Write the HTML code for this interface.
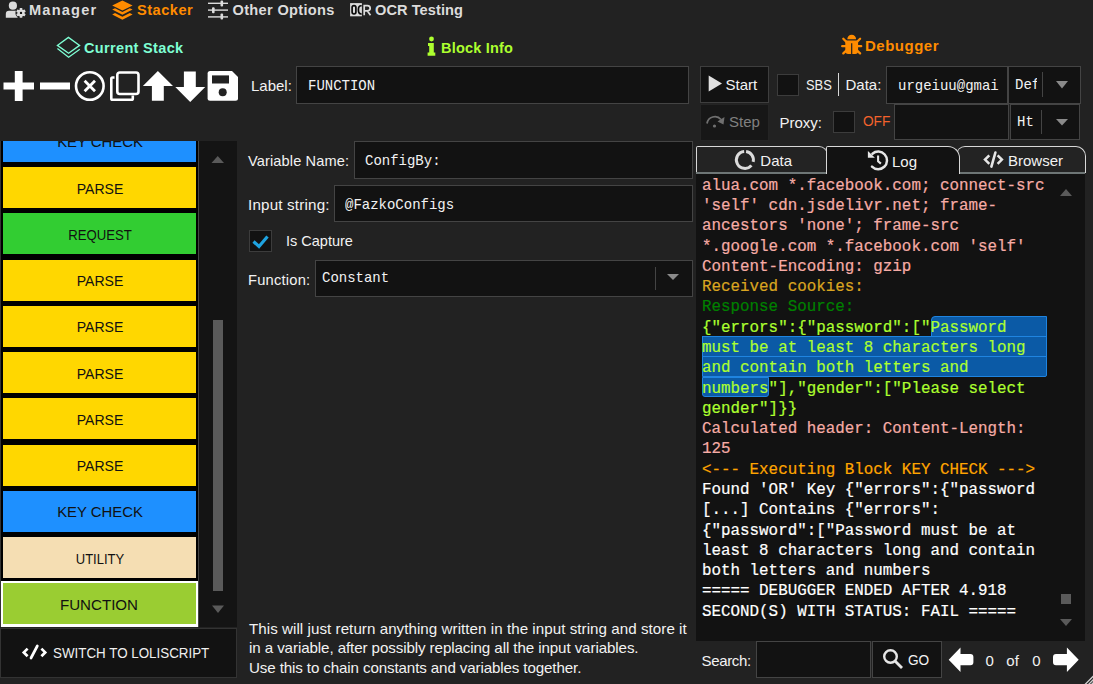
<!DOCTYPE html>
<html><head><meta charset="utf-8"><style>
html,body{margin:0;padding:0;}
body{width:1093px;height:684px;overflow:hidden;background:#222222;position:relative;font-family:"Liberation Sans", sans-serif;}
.t{position:absolute;line-height:0;white-space:pre;}
.r{position:absolute;}
</style></head><body>
<svg class="r" style="left:0px;top:0px" width="30" height="22" viewBox="0 0 30 22"><g fill="#dcdcdc"><circle cx="12.9" cy="5.7" r="4.1"/><path d="M5.8 17.8 L5.8 14 Q5.8 10.8 9 10.8 L16.8 10.8 Q18.6 10.8 19 11.5 L17.5 17.8 Z"/></g><g transform="translate(21,12.9)"><circle r="5.6" fill="#222222"/><g fill="#dcdcdc"><circle r="3.5"/><rect x="-1.3" y="-4.8" width="2.6" height="2.4" rx="0.5" transform="rotate(0)"/><rect x="-1.3" y="-4.8" width="2.6" height="2.4" rx="0.5" transform="rotate(60)"/><rect x="-1.3" y="-4.8" width="2.6" height="2.4" rx="0.5" transform="rotate(120)"/><rect x="-1.3" y="-4.8" width="2.6" height="2.4" rx="0.5" transform="rotate(180)"/><rect x="-1.3" y="-4.8" width="2.6" height="2.4" rx="0.5" transform="rotate(240)"/><rect x="-1.3" y="-4.8" width="2.6" height="2.4" rx="0.5" transform="rotate(300)"/></g><circle r="1.2" fill="#111"/></g></svg>
<div class="t" style="left:29.00px;top:9.64px;font-family:'Liberation Sans', sans-serif;font-size:14.6px;color:#dcdcdc;font-weight:700;letter-spacing:1.2px">Manager</div>
<svg class="r" style="left:110px;top:0px" width="25" height="22" viewBox="0 0 25 22"><g fill="#ff8c00"><path d="M12.4 0.6 L22.6 5.6 L12.4 10.6 L2.2 5.6 Z"/><path d="M2.2 9.6 L5 8.3 L12.4 11.9 L19.8 8.3 L22.6 9.6 L12.4 14.8 Z"/><path d="M2.2 14.4 L5 13.1 L12.4 16.7 L19.8 13.1 L22.6 14.4 L12.4 19.8 Z"/></g></svg>
<div class="t" style="left:137.00px;top:9.64px;font-family:'Liberation Sans', sans-serif;font-size:14.6px;color:#ff8c00;font-weight:700;letter-spacing:0.5px">Stacker</div>
<svg class="r" style="left:206px;top:0px" width="25" height="22" viewBox="0 0 25 22"><g fill="#dcdcdc"><rect x="2" y="2.6" width="20" height="1.4"/><rect x="2" y="9.4" width="20" height="1.4"/><rect x="2" y="16.2" width="20" height="1.4"/><rect x="14.5" y="0.5" width="2.6" height="6" rx="1"/><rect x="6" y="7.2" width="2.6" height="6" rx="1"/><rect x="14.5" y="13.6" width="2.6" height="6" rx="1"/></g></svg>
<div class="t" style="left:232.50px;top:9.64px;font-family:'Liberation Sans', sans-serif;font-size:14.6px;color:#dcdcdc;font-weight:700;letter-spacing:0.32px">Other Options</div>
<svg class="r" style="left:349px;top:2px" width="24" height="16" viewBox="0 0 24 16"><rect x="1.1" y="1.1" width="11.8" height="13.2" fill="#dcdcdc"/><g fill="none" stroke="#0a0a0a" stroke-width="1.7"><rect x="3.1" y="3.6" width="3.8" height="8.4" rx="1.9"/><path d="M12.6 3.8 Q9.4 3.2 9.4 7.8 Q9.4 12.4 12.6 11.8"/></g><path d="M15.2 13.2 L15.2 3.6 L18.4 3.6 Q21.2 3.6 21.2 6.3 Q21.2 8.8 18.2 8.8 L15.2 8.8 M18.2 8.8 L21.5 13.2" fill="none" stroke="#dcdcdc" stroke-width="1.7"/></svg>
<div class="t" style="left:375.00px;top:9.64px;font-family:'Liberation Sans', sans-serif;font-size:14.6px;color:#dcdcdc;font-weight:700;letter-spacing:0.06px">OCR Testing</div>
<svg class="r" style="left:55px;top:35px" width="28" height="25" viewBox="0 0 28 25"><g fill="none" stroke="#7fffd4" stroke-width="1.3" stroke-linejoin="miter"><path d="M13.4 2.4 L24.6 10.4 L13.6 18.3 L2.4 10.4 Z"/><path d="M2.4 13.6 L13.6 22.2 L24.8 14.2"/></g></svg>
<div class="t" style="left:84.00px;top:47.78px;font-family:'Liberation Sans', sans-serif;font-size:14.5px;color:#7fffd4;font-weight:700;letter-spacing:0.34px">Current Stack</div>
<svg class="r" style="left:425px;top:35px" width="14" height="22" viewBox="0 0 14 22"><g fill="#adff2f"><circle cx="6.5" cy="4" r="2.4"/><path d="M3 8 L8.8 8 L8.8 17.5 L10.3 17.5 L10.3 20.7 L2.6 20.7 L2.6 17.5 L4.2 17.5 L4.2 11 L3 11 Z"/></g></svg>
<div class="t" style="left:441.00px;top:47.88px;font-family:'Liberation Sans', sans-serif;font-size:14.5px;color:#adff2f;font-weight:700;letter-spacing:0.2px">Block Info</div>
<svg class="r" style="left:840px;top:33px" width="24" height="24" viewBox="0 0 24 24"><g fill="#ff8c00"><path d="M7.3 6.2 A4.4 4.4 0 0 1 16.1 6.2 Z"/><path d="M5.3 7.6 L18.1 7.6 L18.1 18 Q18.1 20.9 15.2 20.9 L12.3 20.9 L12.3 10.2 L11.1 10.2 L11.1 20.9 L8.2 20.9 Q5.3 20.9 5.3 18 Z"/><g stroke="#ff8c00" stroke-width="2.3" stroke-linecap="round"><path d="M3.3 5.8 L6.5 9"/><path d="M20.1 5.8 L16.9 9"/><path d="M2.2 13.2 L6 13.2"/><path d="M21.2 13.2 L17.4 13.2"/><path d="M3.3 20.4 L6.5 17.4"/><path d="M20.1 20.4 L16.9 17.4"/></g></g></svg>
<div class="t" style="left:865.00px;top:46.10px;font-family:'Liberation Sans', sans-serif;font-size:15px;color:#ff8c00;font-weight:700;letter-spacing:0.5px">Debugger</div>
<svg class="r" style="left:0px;top:68px" width="240" height="36" viewBox="0 0 240 36"><g fill="#ffffff"><rect x="3.5" y="14.5" width="30.5" height="7"/><rect x="14.8" y="3" width="7.8" height="30"/><rect x="40" y="14.5" width="30" height="7"/></g><circle cx="89.8" cy="18" r="13.8" fill="none" stroke="#ffffff" stroke-width="2.6"/><path d="M84.6 12.8 L95 23.2 M95 12.8 L84.6 23.2" stroke="#ffffff" stroke-width="2.8"/><rect x="117.3" y="4.5" width="21.2" height="21.5" rx="2.5" fill="none" stroke="#ffffff" stroke-width="2.6"/><path d="M114.5 9.5 L112.5 9.5 Q111.3 9.5 111.3 10.8 L111.3 30.5 Q111.3 31.8 112.5 31.8 L131.5 31.8 Q132.8 31.8 132.8 30.5 L132.8 27.5" fill="none" stroke="#ffffff" stroke-width="2.6"/><path d="M157.9 3 L173 18 L163.8 18 L163.8 32.7 L151.9 32.7 L151.9 18 L142.9 18 Z" fill="#ffffff"/><path d="M190.2 34 L205.2 19 L195.8 19 L195.8 3.5 L183.9 3.5 L183.9 19 L175.3 19 Z" fill="#ffffff"/><path d="M210.5 3 L232 3 L238 9 L238 30.2 Q238 32.7 235.5 32.7 L210.1 32.7 Q207.6 32.7 207.6 30.2 L207.6 5.5 Q207.6 3 210.1 3 Z" fill="#ffffff"/><rect x="212" y="7.4" width="17" height="8.1" fill="#222222"/><circle cx="222.7" cy="24.3" r="4" fill="#222222"/></svg>
<div class="r" style="left:0.00px;top:141.00px;width:198.00px;height:486.00px;background:#000000;"></div>
<div class="r" style="left:0.00px;top:141.00px;width:1.00px;height:486.00px;background:#333333;"></div>
<div class="r" style="left:198.00px;top:141.00px;width:1.00px;height:486.00px;background:#444444;"></div>
<div class="r" style="left:199.00px;top:141.00px;width:38.00px;height:486.00px;background:#141414;"></div>
<div class="r" style="left:0;top:141px;width:198px;height:486px;overflow:hidden">
<div class="r" style="left:3.3px;top:-20.25px;width:192.5px;height:41.2px;background:#1e90ff"></div>
<div class="t" style="left:-0.50px;width:200px;text-align:center;top:1.38px;font-family:'Liberation Sans';font-size:15.5px;color:#111;transform:scaleX(0.96);transform-origin:100px 0">KEY CHECK</div>
<div class="r" style="left:3.3px;top:26.00px;width:192.5px;height:41.2px;background:#ffd700"></div>
<div class="t" style="left:-0.50px;width:200px;text-align:center;top:47.63px;font-family:'Liberation Sans';font-size:15.5px;color:#111;transform:scaleX(0.906);transform-origin:100px 0">PARSE</div>
<div class="r" style="left:3.3px;top:72.25px;width:192.5px;height:41.2px;background:#32cd32"></div>
<div class="t" style="left:-0.40px;width:200px;text-align:center;top:93.88px;font-family:'Liberation Sans';font-size:15.5px;color:#111;transform:scaleX(0.85);transform-origin:100px 0">REQUEST</div>
<div class="r" style="left:3.3px;top:118.50px;width:192.5px;height:41.2px;background:#ffd700"></div>
<div class="t" style="left:-0.50px;width:200px;text-align:center;top:140.13px;font-family:'Liberation Sans';font-size:15.5px;color:#111;transform:scaleX(0.906);transform-origin:100px 0">PARSE</div>
<div class="r" style="left:3.3px;top:164.75px;width:192.5px;height:41.2px;background:#ffd700"></div>
<div class="t" style="left:-0.50px;width:200px;text-align:center;top:186.38px;font-family:'Liberation Sans';font-size:15.5px;color:#111;transform:scaleX(0.906);transform-origin:100px 0">PARSE</div>
<div class="r" style="left:3.3px;top:211.00px;width:192.5px;height:41.2px;background:#ffd700"></div>
<div class="t" style="left:-0.50px;width:200px;text-align:center;top:232.63px;font-family:'Liberation Sans';font-size:15.5px;color:#111;transform:scaleX(0.906);transform-origin:100px 0">PARSE</div>
<div class="r" style="left:3.3px;top:257.25px;width:192.5px;height:41.2px;background:#ffd700"></div>
<div class="t" style="left:-0.50px;width:200px;text-align:center;top:278.88px;font-family:'Liberation Sans';font-size:15.5px;color:#111;transform:scaleX(0.906);transform-origin:100px 0">PARSE</div>
<div class="r" style="left:3.3px;top:303.50px;width:192.5px;height:41.2px;background:#ffd700"></div>
<div class="t" style="left:-0.50px;width:200px;text-align:center;top:325.13px;font-family:'Liberation Sans';font-size:15.5px;color:#111;transform:scaleX(0.906);transform-origin:100px 0">PARSE</div>
<div class="r" style="left:3.3px;top:349.75px;width:192.5px;height:41.2px;background:#1e90ff"></div>
<div class="t" style="left:-0.50px;width:200px;text-align:center;top:371.38px;font-family:'Liberation Sans';font-size:15.5px;color:#111;transform:scaleX(0.96);transform-origin:100px 0">KEY CHECK</div>
<div class="r" style="left:3.3px;top:396.00px;width:192.5px;height:41.2px;background:#f5deb3"></div>
<div class="t" style="left:-0.25px;width:200px;text-align:center;top:417.63px;font-family:'Liberation Sans';font-size:15.5px;color:#111;transform:scaleX(0.84);transform-origin:100px 0">UTILITY</div>
<div class="r" style="left:1px;top:440.05px;width:197px;height:45.5px;background:#fff"></div>
<div class="r" style="left:3.3px;top:442.25px;width:192.5px;height:41.2px;background:#9acd32"></div>
<div class="t" style="left:-0.55px;width:200px;text-align:center;top:463.88px;font-family:'Liberation Sans';font-size:15.5px;color:#111;transform:scaleX(0.975);transform-origin:100px 0">FUNCTION</div>
</div>
<svg class="r" style="left:199px;top:141px" width="38" height="486" viewBox="0 0 38 486"><g fill="#5a5a5a"><path d="M12.5 22 L25 22 L18.75 15 Z"/><rect x="14" y="179" width="10" height="271"/><path d="M13 464.6 L25 464.6 L19 472 Z"/></g></svg>
<div class="r" style="left:0.00px;top:628.00px;width:237.00px;height:50.00px;background:#121212;box-sizing:border-box;border:1px solid #333333;"></div>
<svg class="r" style="left:19px;top:643px" width="30" height="18" viewBox="0 0 30 18"><g stroke="#ffffff" stroke-width="2.7" fill="none"><path d="M8.6 5.6 L4.8 9.4 L8.6 13.2"/><path d="M22.4 5.6 L26.2 9.4 L22.4 13.2"/><path d="M18.3 3 L12 15" stroke-linecap="round"/></g></svg>
<div class="t" style="left:52.50px;top:653.15px;font-family:'Liberation Sans', sans-serif;font-size:14px;color:#f0f0f0;font-weight:400;transform:scaleX(0.955);transform-origin:0 0">SWITCH TO LOLISCRIPT</div>
<div class="t" style="left:251.00px;top:85.80px;font-family:'Liberation Sans', sans-serif;font-size:15px;color:#f2f2f2;font-weight:400;">Label:</div>
<div class="r" style="left:296.00px;top:66.00px;width:393.00px;height:38.00px;background:#121212;box-sizing:border-box;border:1px solid #444;"></div>
<div class="t" style="left:307.50px;top:85.96px;font-family:'Liberation Mono', monospace;font-size:14.8px;color:#f2f2f2;font-weight:400;transform:scaleX(0.945);transform-origin:0 0">FUNCTION</div>
<div class="t" style="left:248.00px;top:160.84px;font-family:'Liberation Sans', sans-serif;font-size:14.6px;color:#f2f2f2;font-weight:400;letter-spacing:0.12px">Variable Name:</div>
<div class="r" style="left:354.00px;top:141.00px;width:339.00px;height:38.00px;background:#121212;box-sizing:border-box;border:1px solid #444;"></div>
<div class="t" style="left:364.50px;top:161.36px;font-family:'Liberation Mono', monospace;font-size:14.8px;color:#f2f2f2;font-weight:400;transform:scaleX(0.945);transform-origin:0 0">ConfigBy:</div>
<div class="t" style="left:248.00px;top:204.73px;font-family:'Liberation Sans', sans-serif;font-size:15.2px;color:#f2f2f2;font-weight:400;letter-spacing:0.18px">Input string:</div>
<div class="r" style="left:334.00px;top:185.00px;width:359.00px;height:37.00px;background:#121212;box-sizing:border-box;border:1px solid #444;"></div>
<div class="t" style="left:344.50px;top:204.86px;font-family:'Liberation Mono', monospace;font-size:14.8px;color:#f2f2f2;font-weight:400;transform:scaleX(0.945);transform-origin:0 0">@FazkoConfigs</div>
<div class="r" style="left:249.00px;top:230.00px;width:23.00px;height:22.00px;background:#121212;box-sizing:border-box;border:1px solid #3c3c3c;"></div>
<svg class="r" style="left:249px;top:229px" width="23" height="23" viewBox="0 0 23 23"><path d="M4.5 12.5 L10 17.5 L18.5 7.5" fill="none" stroke="#1fa3e0" stroke-width="3.2"/></svg>
<div class="t" style="left:286.00px;top:240.68px;font-family:'Liberation Sans', sans-serif;font-size:14.5px;color:#f2f2f2;font-weight:400;">Is Capture</div>
<div class="t" style="left:248.00px;top:279.61px;font-family:'Liberation Sans', sans-serif;font-size:14.7px;color:#f2f2f2;font-weight:400;letter-spacing:0.22px">Function:</div>
<div class="r" style="left:315.00px;top:260.00px;width:378.00px;height:37.00px;background:#121212;box-sizing:border-box;border:1px solid #444;"></div>
<div class="t" style="left:321.80px;top:277.86px;font-family:'Liberation Mono', monospace;font-size:14.8px;color:#f2f2f2;font-weight:400;transform:scaleX(0.945);transform-origin:0 0">Constant</div>
<div class="r" style="left:655.00px;top:267.00px;width:1.00px;height:23.00px;background:#444;"></div>
<svg class="r" style="left:665px;top:272px" width="16" height="10" viewBox="0 0 16 10"><path d="M2 2 L14 2 L8 8 Z" fill="#8a8a8a"/></svg>
<div class="t" style="left:249.00px;top:628.65px;font-family:'Liberation Sans', sans-serif;font-size:15.15px;color:#f2f2f2;font-weight:400;letter-spacing:0.05px">This will just return anything written in the input string and store it</div>
<div class="t" style="left:249.00px;top:647.55px;font-family:'Liberation Sans', sans-serif;font-size:15.15px;color:#f2f2f2;font-weight:400;letter-spacing:-0.095px">in a variable, after possibly replacing all the input variables.</div>
<div class="t" style="left:249.00px;top:668.25px;font-family:'Liberation Sans', sans-serif;font-size:15.15px;color:#f2f2f2;font-weight:400;letter-spacing:-0.12px">Use this to chain constants and variables together.</div>
<div class="r" style="left:700.00px;top:66.00px;width:69.00px;height:37.00px;background:#121212;box-sizing:border-box;border:1px solid #3e3e3e;"></div>
<svg class="r" style="left:700px;top:66px" width="30" height="36" viewBox="0 0 30 36"><path d="M8.7 9.4 L22 17.4 L8.7 25.4 Z" fill="#e0e0e0"/></svg>
<div class="t" style="left:725.50px;top:84.80px;font-family:'Liberation Sans', sans-serif;font-size:15px;color:#f2f2f2;font-weight:400;">Start</div>
<div class="r" style="left:700.00px;top:104.00px;width:69.00px;height:37.00px;background:#171717;box-sizing:border-box;border:1px solid #242424;"></div>
<svg class="r" style="left:700px;top:105.5px" width="30" height="36" viewBox="0 0 30 36"><g fill="none" stroke="#707070" stroke-width="1.8"><path d="M7 17.5 A8 8 0 0 1 21 13.5"/></g><path d="M17.5 15.5 L24.5 11 L23.5 18.5 Z" fill="#707070"/><circle cx="14.5" cy="20" r="1.6" fill="#707070"/></svg>
<div class="t" style="left:729.00px;top:121.50px;font-family:'Liberation Sans', sans-serif;font-size:15px;color:#808080;font-weight:400;">Step</div>
<div class="r" style="left:777.00px;top:74.00px;width:22.00px;height:22.00px;background:#121212;box-sizing:border-box;border:1px solid #3c3c3c;"></div>
<div class="t" style="left:805.50px;top:84.80px;font-family:'Liberation Sans', sans-serif;font-size:15px;color:#f2f2f2;font-weight:400;transform:scaleX(0.86);transform-origin:0 0">SBS</div>
<div class="r" style="left:838.00px;top:73.00px;width:1.00px;height:23.00px;background:#d8d8d8;"></div>
<div class="t" style="left:845.50px;top:84.80px;font-family:'Liberation Sans', sans-serif;font-size:15px;color:#f2f2f2;font-weight:400;">Data:</div>
<div class="r" style="left:886.00px;top:66.00px;width:122.00px;height:38.00px;background:#121212;box-sizing:border-box;border:1px solid #444;"></div>
<div class="r" style="left:897px;top:67px;width:102px;height:36px;overflow:hidden">
<div class="t" style="left:0.5px;top:18.66px;font-family:'Liberation Mono';font-size:14.8px;color:#f2f2f2;transform:scaleX(0.945);transform-origin:0 0">urgeiuu@gmail.com</div>
</div>
<div class="r" style="left:1008.00px;top:66.00px;width:73.00px;height:38.00px;background:#121212;box-sizing:border-box;border:1px solid #444;"></div>
<div class="r" style="left:1014.5px;top:67px;width:22px;height:36px;overflow:hidden">
<div class="t" style="left:0.5px;top:18.16px;font-family:'Liberation Mono';font-size:14.8px;color:#f2f2f2;transform:scaleX(0.945);transform-origin:0 0">Default</div>
</div>
<div class="r" style="left:1042.00px;top:72.00px;width:1.00px;height:25.00px;background:#444;"></div>
<svg class="r" style="left:1054px;top:79px" width="16" height="12" viewBox="0 0 16 12"><path d="M2 2 L14 2 L8 9.5 Z" fill="#8a8a8a"/></svg>
<div class="t" style="left:779.50px;top:122.50px;font-family:'Liberation Sans', sans-serif;font-size:15px;color:#f2f2f2;font-weight:400;">Proxy:</div>
<div class="r" style="left:833.00px;top:111.00px;width:22.00px;height:22.00px;background:#121212;box-sizing:border-box;border:1px solid #3c3c3c;"></div>
<div class="t" style="left:862.50px;top:121.20px;font-family:'Liberation Sans', sans-serif;font-size:15px;color:#f4622c;font-weight:400;transform:scaleX(0.91);transform-origin:0 0">OFF</div>
<div class="r" style="left:894.00px;top:104.00px;width:115.00px;height:36.00px;background:#121212;box-sizing:border-box;border:1px solid #444;"></div>
<div class="r" style="left:1010.00px;top:104.00px;width:70.00px;height:36.00px;background:#121212;box-sizing:border-box;border:1px solid #444;"></div>
<div class="t" style="left:1017.30px;top:121.56px;font-family:'Liberation Mono', monospace;font-size:14.8px;color:#f2f2f2;font-weight:400;transform:scaleX(0.945);transform-origin:0 0">Ht</div>
<div class="r" style="left:1041.00px;top:110.00px;width:1.00px;height:24.00px;background:#444;"></div>
<svg class="r" style="left:1054px;top:117px" width="16" height="12" viewBox="0 0 16 12"><path d="M2 2 L14 2 L8 8.5 Z" fill="#8a8a8a"/></svg>
<div class="r" style="left:696.00px;top:172.00px;width:389.00px;height:469.00px;background:#121212;"></div>
<div class="r" style="left:696.00px;top:171.80px;width:389.00px;height:2.00px;background:#6e7676;"></div>
<div class="r" style="left:696px;top:146px;width:132px;height:27px;box-sizing:border-box;background:#232323;border:1px solid #d8d8d8;border-bottom:none;border-radius:2px 9px 0 0"></div>
<div class="r" style="left:955.5px;top:146.2px;width:130px;height:26.8px;box-sizing:border-box;background:#232323;border:1px solid #d8d8d8;border-bottom:none;border-radius:9px 10px 0 0"></div>
<div class="r" style="left:696.00px;top:171.80px;width:389.00px;height:2.00px;background:#6e7676;"></div>
<div class="r" style="left:825.5px;top:146px;width:134px;height:28px;box-sizing:border-box;background:#121212;border:1px solid #d8d8d8;border-bottom:none;border-radius:2px 12px 0 0"></div>
<svg class="r" style="left:733px;top:148px" width="24" height="24" viewBox="0 0 24 24"><g fill="none" stroke="#dcdcdc" stroke-width="3"><path d="M13.08 3.48 A8.5 8.5 0 0 1 20.18 13.81"/><path d="M18.41 17.36 A8.5 8.5 0 1 1 11.16 3.43"/></g></svg>
<div class="t" style="left:760.30px;top:160.60px;font-family:'Liberation Sans', sans-serif;font-size:15px;color:#f2f2f2;font-weight:400;">Data</div>
<svg class="r" style="left:865px;top:148px" width="26" height="25" viewBox="0 0 26 25"><g fill="none" stroke="#e6e6e6"><path d="M7.43 5.76 A8.8 8.8 0 1 1 6.98 18.62" stroke-width="2.5" stroke-linecap="round"/><path d="M13.1 7.6 L13.1 13.2 L15.9 15.6" stroke-width="2.1"/></g><path d="M2.9 3 L2.9 9.8 L9.9 9.8 Z" fill="#e6e6e6"/></svg>
<div class="t" style="left:892.00px;top:161.50px;font-family:'Liberation Sans', sans-serif;font-size:15px;color:#f2f2f2;font-weight:400;">Log</div>
<svg class="r" style="left:982px;top:150px" width="23" height="20" viewBox="0 0 23 20"><g stroke="#e6e6e6" stroke-width="2.5" fill="none"><path d="M7.3 5.3 L3 9.6 L7.3 13.9"/><path d="M15.6 5.3 L19.9 9.6 L15.6 13.9"/><path d="M13.4 2.5 L9.4 16.6" stroke-width="2.6" stroke-linecap="round"/></g></svg>
<div class="t" style="left:1008.00px;top:161.30px;font-family:'Liberation Sans', sans-serif;font-size:15px;color:#f2f2f2;font-weight:400;">Browser</div>
<div class="r" style="left:930.50px;top:315.63px;width:116.50px;height:20.89px;box-sizing:border-box;background:#0b5aa6;border:1px solid #1f84e0;border-radius:4px 0 0 0"></div>
<div class="r" style="left:702.00px;top:335.92px;width:345.00px;height:20.89px;box-sizing:border-box;background:#0b5aa6;border:1px solid #1f84e0;"></div>
<div class="r" style="left:702.00px;top:356.21px;width:345.00px;height:20.89px;box-sizing:border-box;background:#0b5aa6;border:1px solid #1f84e0;border-radius:0 0 2px 0"></div>
<div class="r" style="left:702.00px;top:376.50px;width:67.30px;height:20.89px;box-sizing:border-box;background:#0b5aa6;border:1px solid #1f84e0;border-radius:0 0 3px 3px"></div>
<div class="r" style="left:702px;top:175.80px;font-family:'Liberation Mono';font-size:15.87px;line-height:20.29px;-webkit-text-stroke:0.2px"><div style="color:#f6aca6;height:20.29px;white-space:pre">alua.com *.facebook.com; connect-src</div><div style="color:#f6aca6;height:20.29px;white-space:pre">'self' cdn.jsdelivr.net; frame-</div><div style="color:#f6aca6;height:20.29px;white-space:pre">ancestors 'none'; frame-src</div><div style="color:#f6aca6;height:20.29px;white-space:pre">*.google.com *.facebook.com 'self'</div><div style="color:#f6aca6;height:20.29px;white-space:pre">Content-Encoding: gzip</div><div style="color:#daa520;height:20.29px;white-space:pre">Received cookies:</div><div style="color:#008000;height:20.29px;white-space:pre">Response Source:</div><div style="color:#adff2f;height:20.29px;white-space:pre">{"errors":{"password":["Password</div><div style="color:#adff2f;height:20.29px;white-space:pre">must be at least 8 characters long</div><div style="color:#adff2f;height:20.29px;white-space:pre">and contain both letters and</div><div style="color:#adff2f;height:20.29px;white-space:pre">numbers"],"gender":["Please select</div><div style="color:#adff2f;height:20.29px;white-space:pre">gender"]}}</div><div style="color:#f6aca6;height:20.29px;white-space:pre">Calculated header: Content-Length:</div><div style="color:#f6aca6;height:20.29px;white-space:pre">125</div><div style="color:#ffa500;height:20.29px;white-space:pre">&lt;--- Executing Block KEY CHECK ---&gt;</div><div style="color:#ffffff;height:20.29px;white-space:pre">Found 'OR' Key {"errors":{"password</div><div style="color:#ffffff;height:20.29px;white-space:pre">[...] Contains {"errors":</div><div style="color:#ffffff;height:20.29px;white-space:pre">{"password":["Password must be at</div><div style="color:#ffffff;height:20.29px;white-space:pre">least 8 characters long and contain</div><div style="color:#ffffff;height:20.29px;white-space:pre">both letters and numbers</div><div style="color:#ffffff;height:20.29px;white-space:pre">===== DEBUGGER ENDED AFTER 4.918</div><div style="color:#ffffff;height:20.29px;white-space:pre">SECOND(S) WITH STATUS: FAIL =====</div></div>
<svg class="r" style="left:1055px;top:185px" width="22" height="445" viewBox="0 0 22 445"><g fill="#5a5a5a"><path d="M5 11 L17 11 L11 4 Z"/><rect x="6" y="409" width="10" height="10"/><path d="M5 434 L17 434 L11 441 Z"/></g></svg>
<div class="t" style="left:701.50px;top:661.00px;font-family:'Liberation Sans', sans-serif;font-size:15px;color:#f2f2f2;font-weight:400;letter-spacing:-0.33px">Search:</div>
<div class="r" style="left:756.00px;top:641.00px;width:115.00px;height:37.00px;background:#121212;box-sizing:border-box;border:1px solid #444;"></div>
<div class="r" style="left:872.00px;top:641.00px;width:70.00px;height:37.00px;background:#121212;box-sizing:border-box;border:1px solid #444;"></div>
<svg class="r" style="left:881px;top:647px" width="24" height="24" viewBox="0 0 24 24"><circle cx="9.5" cy="9.5" r="6.3" fill="none" stroke="#e6e6e6" stroke-width="2.4"/><path d="M14 14 L21 21" stroke="#e6e6e6" stroke-width="2.8"/></svg>
<div class="t" style="left:908.30px;top:659.60px;font-family:'Liberation Sans', sans-serif;font-size:15px;color:#f2f2f2;font-weight:400;transform:scaleX(0.91);transform-origin:0 0">GO</div>
<svg class="r" style="left:946px;top:645px" width="30" height="30" viewBox="0 0 30 30"><path d="M2.7 14.7 L14.5 2.4 L14.5 9 L24.4 9 Q27.4 9 27.4 12 L27.4 17.2 Q27.4 20.2 24.4 20.2 L14.5 20.2 L14.5 27 Z" fill="#fff"/></svg>
<div class="t" style="left:985.50px;top:660.50px;font-family:'Liberation Sans', sans-serif;font-size:15px;color:#f2f2f2;font-weight:400;">0</div>
<div class="t" style="left:1006.30px;top:660.50px;font-family:'Liberation Sans', sans-serif;font-size:15px;color:#f2f2f2;font-weight:400;">of</div>
<div class="t" style="left:1032.30px;top:660.50px;font-family:'Liberation Sans', sans-serif;font-size:15px;color:#f2f2f2;font-weight:400;">0</div>
<svg class="r" style="left:1050px;top:645px" width="30" height="30" viewBox="0 0 30 30"><path d="M28.7 14.7 L16.9 2.4 L16.9 9 L6 9 Q3 9 3 12 L3 17.2 Q3 20.2 6 20.2 L16.9 20.2 L16.9 27 Z" fill="#fff"/></svg>
<svg class="r" style="left:1078px;top:668px" width="15" height="16" viewBox="0 0 15 16"><g stroke="#d0d0d0" stroke-width="1.3"><path d="M7 16.5 L15.5 8"/><path d="M10.5 16.5 L15.5 11.5"/><path d="M13.5 16.5 L15.5 14.5"/></g></svg>
</body></html>
